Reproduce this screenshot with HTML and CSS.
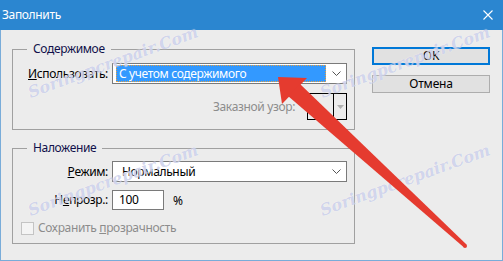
FILE: index.html
```html
<!DOCTYPE html>
<html lang="ru">
<head>
<meta charset="utf-8">
<title>Заполнить</title>
<link rel="stylesheet" href="styles.css">
</head>
<body>
<div class="window">
  <div class="titlebar">
    <span class="title">Заполнить</span>
    <svg class="close" width="10" height="10" viewBox="0 0 10 10"><path d="M0.5 0.5 L9.5 9.5 M9.5 0.5 L0.5 9.5" stroke="#fff" stroke-width="1.1" fill="none"/></svg>
  </div>
  <div class="frame">
    <div class="groups">
      <fieldset class="group group-content">
        <legend>Содержимое</legend>
        <label class="lbl"><u>И</u>спользовать:</label>
        <div class="select select-focused">
          <span class="sel-value">С учетом содержимого</span>
          <svg class="chev" width="9" height="5" viewBox="0 0 9 5"><path d="M0.5 0.5 L4.5 4.5 L8.5 0.5" stroke="#555" fill="none"/></svg>
        </div>
        <div class="pattern-row">
          <span class="lbl-disabled">Заказной узор:</span>
          <div class="pattern">
            <span class="pattern-swatch"></span>
            <span class="pattern-btn"><svg width="7" height="4" viewBox="0 0 7 4"><path d="M0 0 H7 L3.5 4 Z" fill="#b0b0b0"/></svg></span>
          </div>
        </div>
      </fieldset>
      <fieldset class="group group-blend">
        <legend>Наложение</legend>
        <label class="lbl"><u>Р</u>ежим:</label>
        <div class="select">
          <span class="sel-text">Нормальный</span>
          <svg class="chev" width="9" height="5" viewBox="0 0 9 5"><path d="M0.5 0.5 L4.5 4.5 L8.5 0.5" stroke="#555" fill="none"/></svg>
        </div>
        <label class="lbl lbl-opacity">Н<u>е</u>прозр.:</label>
        <div class="opacity">
          <span class="input">100</span>
          <span class="pct">%</span>
        </div>
        <div class="check-row">
          <span class="checkbox"></span>
          <span class="lbl-disabled">Сохранить <u>п</u>розрачность</span>
        </div>
      </fieldset>
    </div>
    <div class="buttons">
      <button class="btn btn-default">OK</button>
      <button class="btn">Отмена</button>
    </div>
  </div>
  <div class="wm wm1">Soringpcrepair.Com</div>
  <div class="wm wm2">Soringpcrepair.Com</div>
  <div class="wm wm3">Soringpcrepair.Com</div>
  <div class="wm wm4">Soringpcrepair.Com</div>
  <svg class="arrow" width="503" height="261" viewBox="0 0 503 261">
    <polygon points="278,77 307,78 282,104" fill="#e53b2f"/>
    <polygon points="300,84 288,96 463.5,247 466.5,244.5" fill="#e53b2f"/>
    <circle cx="465" cy="246" r="2" fill="#e53b2f"/>
  </svg>
</div>
</body>
</html>
```
FILE: styles.css
```css
* { box-sizing: border-box; }
html, body { margin: 0; padding: 0; }
body {
  width: 503px;
  height: 261px;
  overflow: hidden;
  font-family: "Noto Sans", "DejaVu Sans", sans-serif;
  font-size: 12px;
  letter-spacing: -0.35px;
  color: #000;
  background: #ececec;
}
.window {
  position: relative;
  width: 503px;
  height: 261px;
  display: flex;
  flex-direction: column;
}
.titlebar {
  height: 30px;
  flex: none;
  background: #2b86d0;
  display: flex;
  align-items: center;
  justify-content: space-between;
  padding: 0 10px 0 2px;
}
.title { color: #fff; font-size: 12px; line-height: 16px; }
.close { display: block; }
.frame {
  flex: 1;
  background: #ececec;
  border: 1px solid #79acd9;
  border-top: none;
  display: flex;
  padding: 11px 0 0 11px;
  gap: 17px;
}
.groups { width: 343px; display: flex; flex-direction: column; gap: 10px; }
.group {
  margin: 0;
  min-width: 0;
  border: 1px solid #a0a0a0;
  padding: 0 7px 0 0;
  display: grid;
  grid-template-columns: 95px 1fr;
  column-gap: 4px;
  align-items: center;
}
legend {
  margin-left: 14px;
  padding: 0 6px;
  line-height: 16px;
  color: #10104a;
}
.lbl { text-align: right; line-height: 16px; white-space: nowrap; }
.lbl-disabled { color: #8c8c8c; white-space: nowrap; line-height: 16px; }
.select {
  height: 21px;
  background: #fff;
  border: 1px solid #7a7a7a;
  display: flex;
  align-items: center;
  padding: 0 5px 0 3px;
  justify-content: space-between;
}
.group-content .select, .group-content .lbl { margin-top: 6px; }
.select-focused .sel-value {
  flex: none;
  width: 210px;
  height: 17px;
  background: #3399ff;
  color: #fff;
  line-height: 15px;
  padding-left: 2px;
  border: 1px dotted #1a1a1a;
  outline: 1px dotted #e8a040;
  outline-offset: -1px;
}
.sel-text { padding-left: 6px; line-height: 16px; }
.chev { display: block; }
.pattern-row {
  grid-column: 1 / -1;
  display: flex;
  justify-content: flex-end;
  align-items: center;
  gap: 12px;
  margin: 9px 0 9px;
}
.pattern {
  width: 40px;
  height: 27px;
  border: 1px solid #000;
  display: flex;
}
.pattern-swatch { flex: 1; border-right: 1px solid #000; }
.pattern-btn { width: 12px; display: flex; align-items: center; justify-content: center; }
.pattern-btn svg { display: block; }
.group-blend .select, .group-blend .lbl:first-of-type { margin-top: 5px; }
.lbl-opacity { margin-top: 8px; }
.opacity { display: flex; align-items: center; gap: 9px; margin-top: 8px; }
.input {
  width: 52px;
  height: 20px;
  background: #fff;
  border: 1px solid #7a7a7a;
  line-height: 18px;
  padding-left: 6px;
}
.check-row {
  grid-column: 1 / -1;
  display: flex;
  align-items: center;
  gap: 4px;
  margin: 10px 0 7px 8px;
}
.checkbox {
  width: 13px;
  height: 13px;
  border: 1px solid #c4c4c4;
  background: #f4f4f4;
}
.buttons { display: flex; flex-direction: column; gap: 10px; padding-top: 6px; }
.btn {
  width: 118px;
  height: 18px;
  margin: 0;
  padding: 0;
  font-family: inherit;
  font-size: 12px;
  letter-spacing: -0.2px;
  line-height: 14px;
  color: #000;
  background: #e1e1e1;
  border: 1px solid #adadad;
}
.btn-default { border: 2px solid #0078d7; }
.wm {
  position: absolute;
  transform: translate(-50%, -50%) rotate(-20deg);
  font-family: "DejaVu Serif", serif;
  font-style: italic;
  font-weight: bold;
  font-size: 16px;
  letter-spacing: 0;
  color: rgba(140, 150, 210, 0.4);
  text-shadow: 0 0 1px rgba(255, 255, 255, 0.9);
  white-space: nowrap;
  pointer-events: none;
}
.wm1 { left: 113px; top: 62px; }
.wm2 { left: 405px; top: 62px; }
.wm3 { left: 113px; top: 180px; }
.wm4 { left: 405px; top: 180px; }
.arrow { position: absolute; left: 0; top: 0; pointer-events: none; }
```
